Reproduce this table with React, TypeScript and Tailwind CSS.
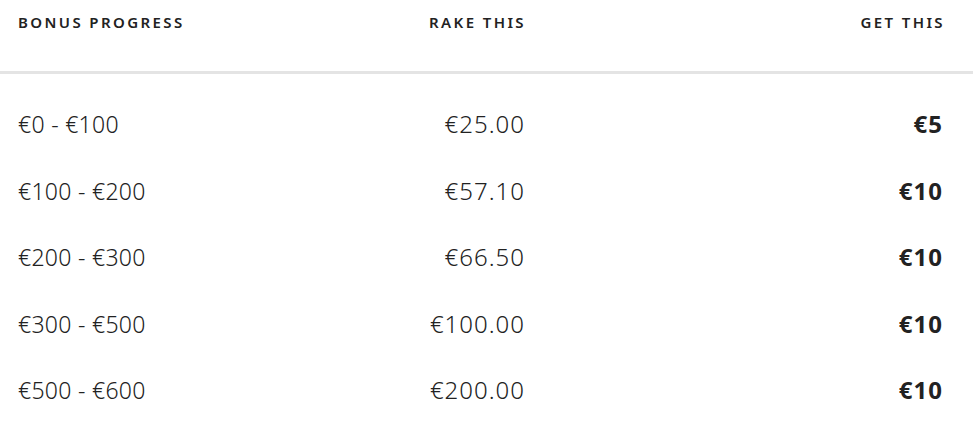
import React from "react";

const rows = [
  { range: "€0 - €100", rake: "€25.00", get: "€5" },
  { range: "€100 - €200", rake: "€57.10", get: "€10" },
  { range: "€200 - €300", rake: "€66.50", get: "€10" },
  { range: "€300 - €500", rake: "€100.00", get: "€10" },
  { range: "€500 - €600", rake: "€200.00", get: "€10" },
];

const App: React.FC = () => {
  return (
    <div
      className="w-[973px] h-[423px] bg-white text-[#222] overflow-hidden"
      style={{ fontFamily: '"Noto Sans", "Open Sans", sans-serif' }}
    >
      <div className="h-[74px] border-b-[3px] border-[#e4e4e4]">
        <div className="grid grid-cols-[406px_100px_1fr] pl-[18px] pr-[31px] pt-[12px] text-[15px] leading-[21px] font-semibold tracking-[2.4px] uppercase">
          <div>Bonus Progress</div>
          <div className="whitespace-nowrap text-right -mr-[2px]">Rake This</div>
          <div className="text-right -mr-[3px]">Get This</div>
        </div>
      </div>

      <div className="pt-[17px]">
        {rows.map((r, i) => (
          <div
            key={i}
            className="grid grid-cols-[406px_100px_1fr] items-center pl-[18px] pr-[31px] h-[66.5px] font-light"
          >
            <div className="text-[23px] tracking-[0.3px]">{r.range}</div>
            <div className="text-right text-[24px] tracking-[1px] -mr-[1px]">{r.rake}</div>
            <div className="text-right text-[24px] tracking-[1px] -mr-[1px] font-bold">{r.get}</div>
          </div>
        ))}
      </div>
    </div>
  );
};

export default App;
